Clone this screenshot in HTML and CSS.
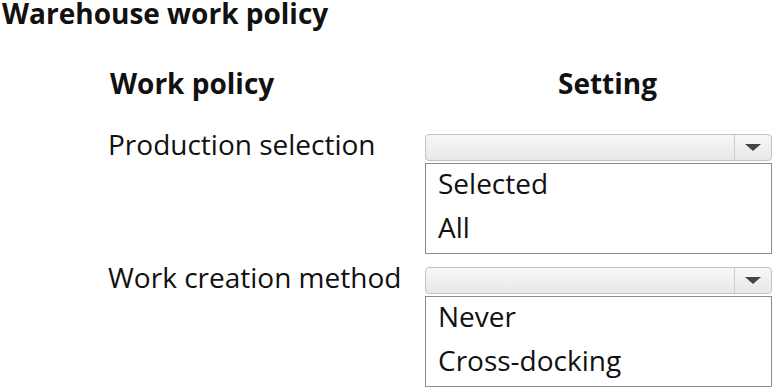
FILE: index.html
```html
<!DOCTYPE html>
<html lang="en">
<head>
  <meta charset="UTF-8">
  <title>Warehouse work policy</title>
  <link rel="stylesheet" href="styles.css">
</head>
<body>

  <!-- Titel -->
  <h1 class="page-title">Warehouse work policy</h1>

  <!-- Tabelle mit Richtlinien und Einstellungen -->
  <div class="policy-table">
    <div class="head-cell">Work policy</div>
    <div class="head-cell setting-head">Setting</div>

    <div class="policy-label">Production selection</div>
    <div class="setting-cell">
      <div class="combo">
        <div class="combo-value"></div>
        <div class="combo-arrow"><span class="triangle"></span></div>
      </div>
      <ul class="listbox">
        <li>Selected</li>
        <li>All</li>
      </ul>
    </div>

    <div class="policy-label">Work creation method</div>
    <div class="setting-cell">
      <div class="combo">
        <div class="combo-value"></div>
        <div class="combo-arrow"><span class="triangle"></span></div>
      </div>
      <ul class="listbox">
        <li>Never</li>
        <li>Cross-docking</li>
      </ul>
    </div>
  </div>

</body>
</html>
```

FILE: styles.css
```css
/* Grundlayout */
body {
  font-family: "Open Sans", "Noto Sans", sans-serif;
  color: #111;
  background-color: #fff;
  margin: 0;
  padding: 0;
}

.page-title {
  font-size: 28px;
  font-weight: bold;
  line-height: 26px;
  margin: 0;
  padding: 0 0 0 2px;
}

/* Tabelle */
.policy-table {
  display: grid;
  grid-template-columns: 317px 347px;
  margin: 40px 0 0 108px;
  font-size: 28px;
}

.head-cell {
  font-weight: bold;
  line-height: 34px;
  padding-left: 2px;
  margin-bottom: 34px;
}

.setting-head {
  text-align: center;
  padding-left: 18px;
}

.policy-label {
  line-height: 20px;
}

.setting-cell {
  margin-bottom: 13px;
}

/* Kombinationsfeld */
.combo {
  display: flex;
  height: 25px;
  border: 1px solid #c2c2c2;
  border-radius: 4px;
  background: linear-gradient(#f7f7f7, #e8e8e8);
}

.combo-value {
  flex: 1;
}

.combo-arrow {
  width: 36px;
  border-left: 1px solid #cdcdcd;
  display: flex;
  justify-content: center;
  align-items: center;
}

.triangle {
  width: 0;
  height: 0;
  border-left: 8px solid transparent;
  border-right: 8px solid transparent;
  border-top: 7px solid #444;
}

/* Aufklappliste */
.listbox {
  box-sizing: border-box;
  list-style: none;
  display: flex;
  flex-direction: column;
  gap: 6px;
  margin: 2px 0 0 0;
  padding: 0 12px;
  height: 91px;
  border: 1px solid #8c8c8c;
  line-height: 38px;
}
```
